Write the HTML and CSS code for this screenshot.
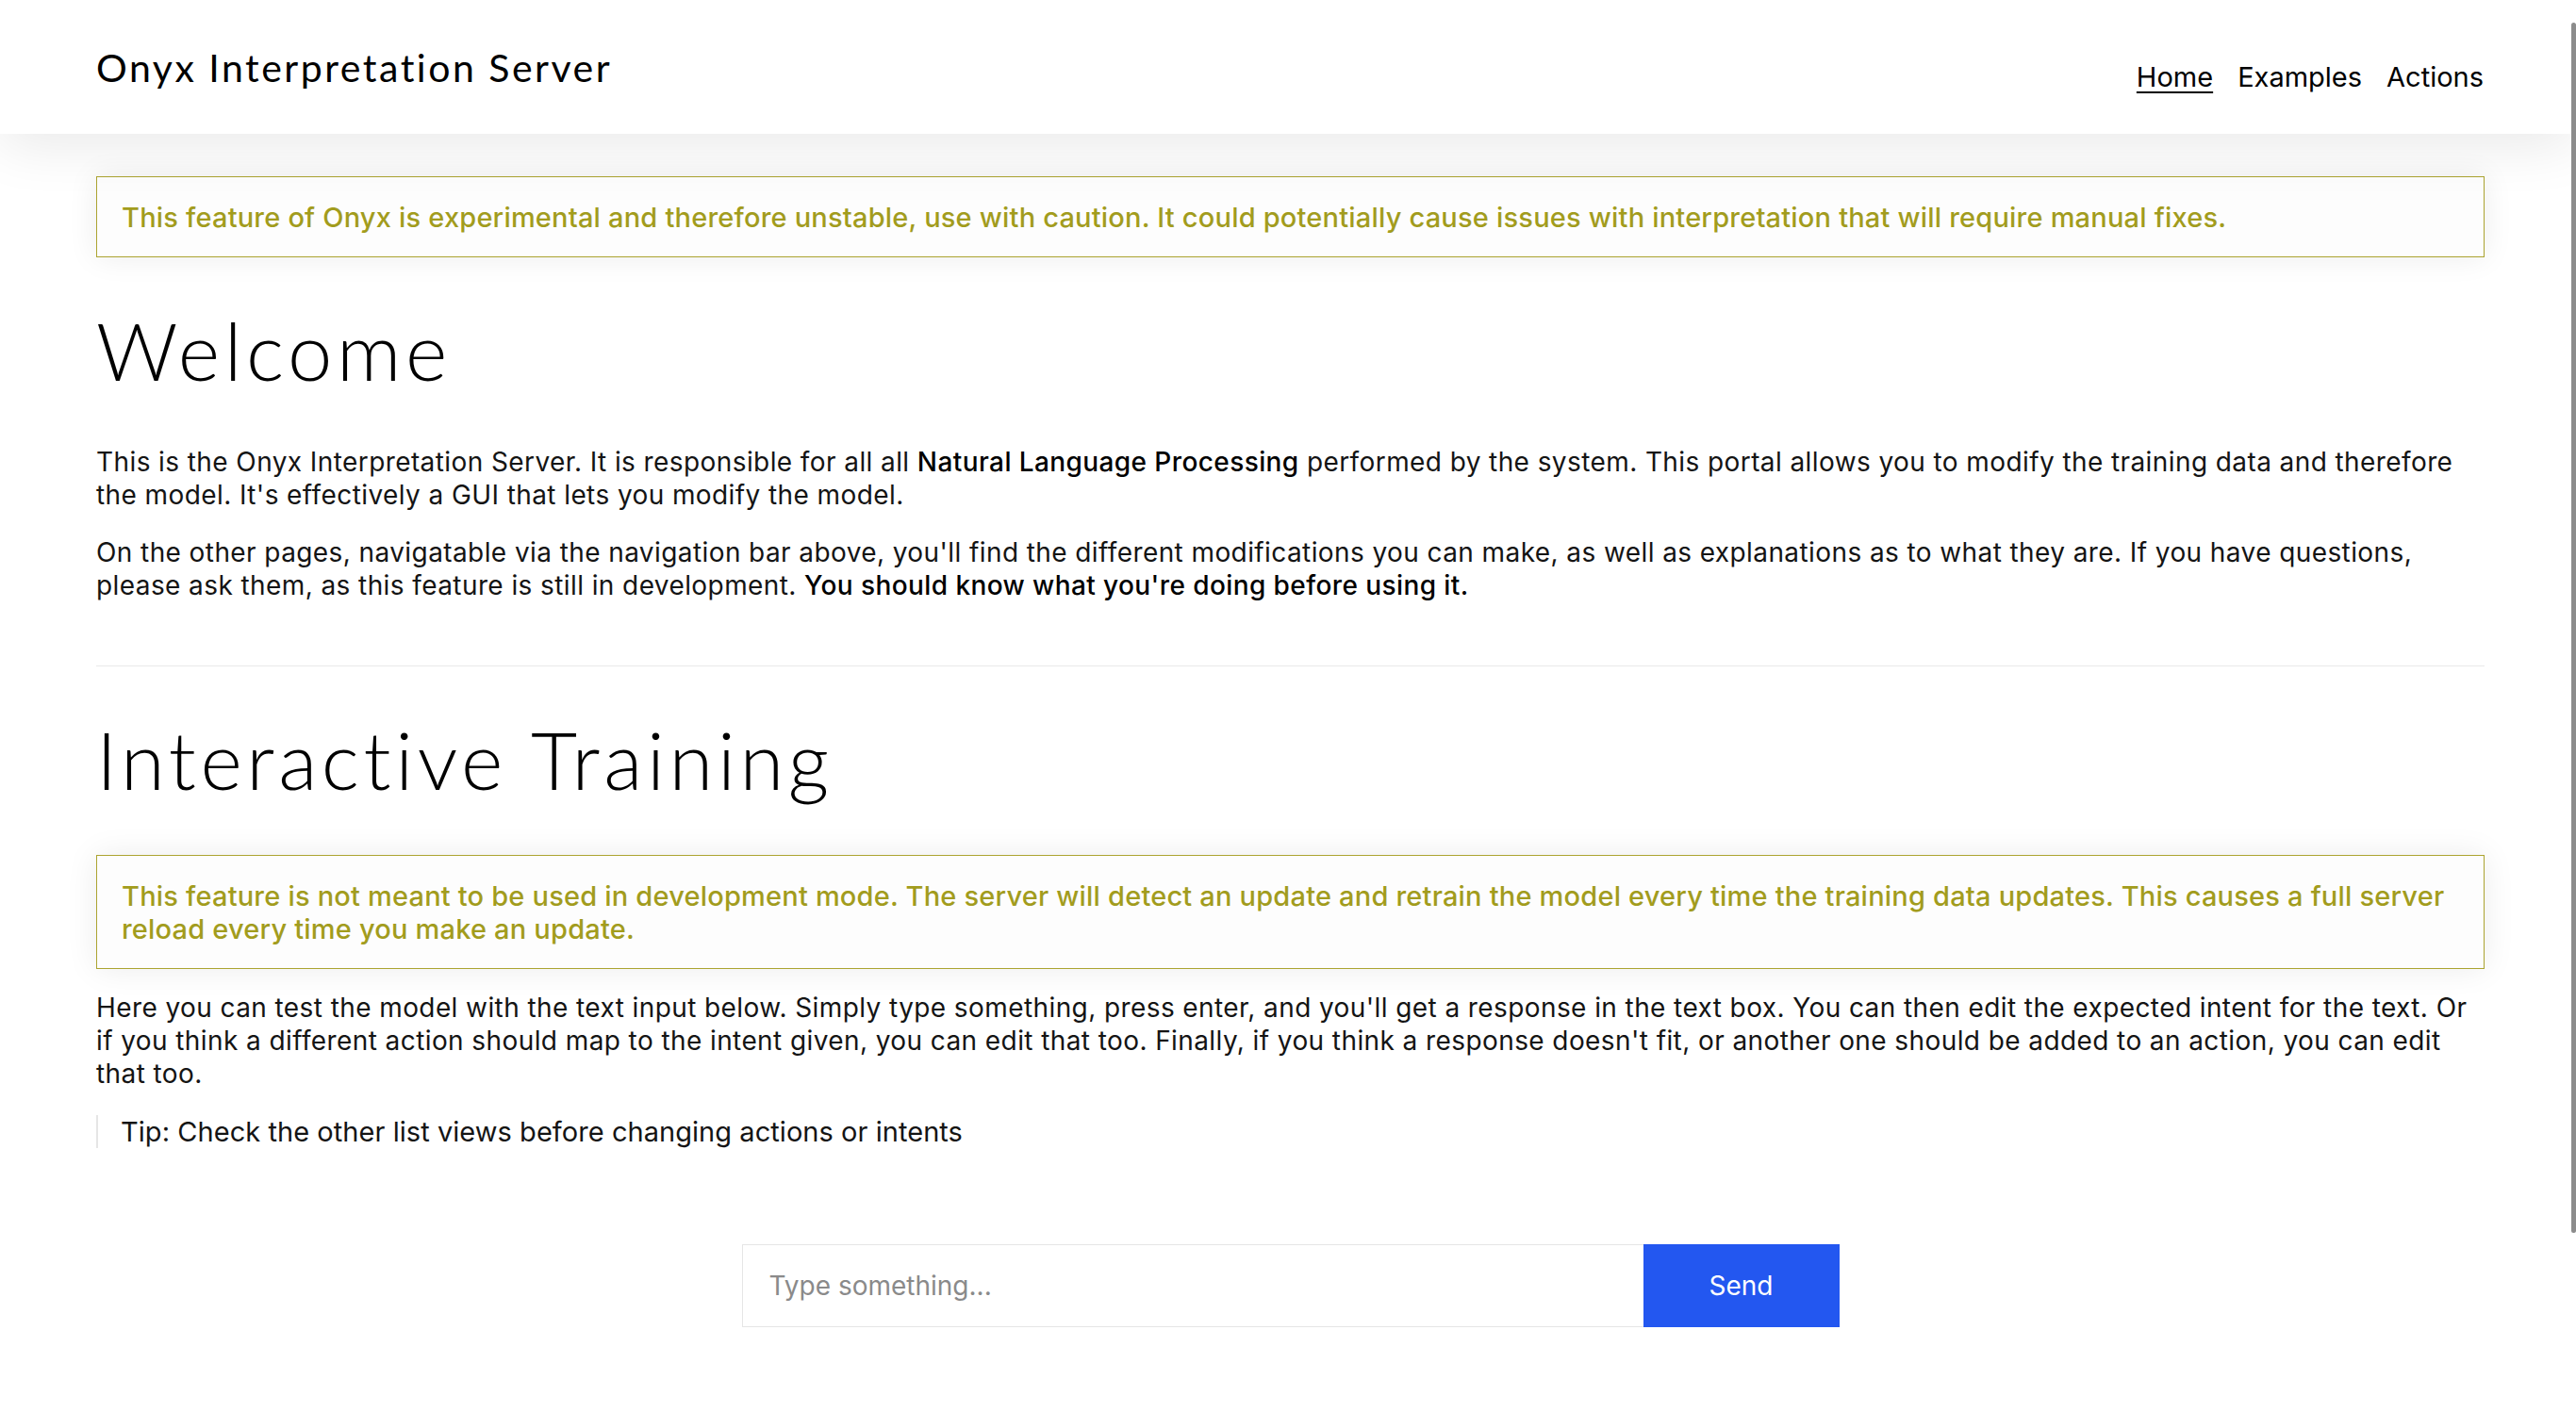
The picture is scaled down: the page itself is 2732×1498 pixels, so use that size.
FILE: index.html
```html
<!DOCTYPE html>
<html lang="en">
<head>
<meta charset="utf-8">
<title>Onyx Interpretation Server</title>
<link rel="stylesheet" href="styles.css">
</head>
<body>
<header class="topbar">
  <div class="brand">Onyx Interpretation Server</div>
  <nav class="nav">
    <a class="nav-link active" href="#">Home</a>
    <a class="nav-link" href="#">Examples</a>
    <a class="nav-link" href="#">Actions</a>
  </nav>
</header>
<main class="content">
  <div class="alert">This feature of Onyx is experimental and therefore unstable, use with caution. It could potentially cause issues with interpretation that will require manual fixes.</div>
  <h1 class="heading">Welcome</h1>
  <p class="text">This is the Onyx Interpretation Server. It is responsible for all all <strong>Natural Language Processing</strong> performed by the system. This portal allows you to modify the training data and therefore the model. It's effectively a GUI that lets you modify the model.</p>
  <p class="text">On the other pages, navigatable via the navigation bar above, you'll find the different modifications you can make, as well as explanations as to what they are. If you have questions, please ask them, as this feature is still in development. <strong>You should know what you're doing before using it.</strong></p>
  <hr class="divider">
  <h1 class="heading">Interactive Training</h1>
  <div class="alert">This feature is not meant to be used in development mode. The server will detect an update and retrain the model every time the training data updates. This causes a full server reload every time you make an update.</div>
  <p class="text">Here you can test the model with the text input below. Simply type something, press enter, and you'll get a response in the text box. You can then edit the expected intent for the text. Or if you think a different action should map to the intent given, you can edit that too. Finally, if you think a response doesn't fit, or another one should be added to an action, you can edit that too.</p>
  <blockquote class="tip">Tip: Check the other list views before changing actions or intents</blockquote>
  <form class="chat">
    <input class="chat-input" type="text" placeholder="Type something...">
    <button class="chat-send" type="button">Send</button>
  </form>
</main>
<div class="scroll-thumb"></div>
</body>
</html>
```

FILE: styles.css
```css
html, body {
  margin: 0;
  padding: 0;
  background: #ffffff;
  overflow: hidden;
}

body {
  font-family: Inter, "Noto Sans", "Liberation Sans", sans-serif;
  font-size: 28px;
  line-height: 35px;
  letter-spacing: 0.41px;
  color: #141414;
}

.topbar {
  position: relative;
  z-index: 2;
  height: 142px;
  box-sizing: border-box;
  padding: 0 98px 0 102px;
  display: flex;
  justify-content: space-between;
  align-items: flex-start;
  background: #ffffff;
  box-shadow: 0 12px 60px rgba(0, 0, 0, 0.09);
}

.brand {
  margin-top: 48px;
  font-family: Lato, "Open Sans", sans-serif;
  font-size: 41px;
  line-height: 48px;
  font-weight: 400;
  letter-spacing: 2.5px;
  color: #000000;
}

.nav {
  margin-top: 64px;
  display: flex;
  gap: 26px;
}

.nav-link {
  font-size: 29px;
  line-height: 35px;
  letter-spacing: 0;
  color: #000000;
  text-decoration: none;
}

.nav-link.active {
  text-decoration: underline;
  text-decoration-thickness: 2px;
  text-underline-offset: 5px;
}

.content {
  position: relative;
  z-index: 1;
  padding: 45px 97px 0 102px;
}

.alert {
  background: #fdfdfd;
  border: 1px solid #aca431;
  color: #a29c1d;
  font-size: 29px;
  letter-spacing: 0.2px;
  font-weight: 500;
  padding: 25px 26px 24px 26px;
  box-shadow: 0 0 32px rgba(0, 0, 0, 0.08);
}

.heading {
  margin: 47px 0 51px 0;
  font-family: Lato, "Open Sans", sans-serif;
  font-weight: 300;
  font-size: 85px;
  line-height: 1.2;
  letter-spacing: 4.6px;
  color: #000000;
}

.text {
  margin: 0 0 26px 0;
}

.text strong {
  font-weight: 500;
  color: #000000;
}

.divider {
  margin: 67px 0 47px 0;
  border: 0;
  border-top: 1px solid #e9e9e9;
  height: 0;
}

.alert + .text {
  margin-top: 24px;
}

.tip {
  margin: 0;
  padding-left: 24px;
  border-left: 2px solid #e6e6e6;
  font-size: 29px;
  letter-spacing: 0.05px;
}

.chat {
  margin-top: 102px;
  display: flex;
  justify-content: center;
}

.chat-input {
  width: 956px;
  height: 88px;
  box-sizing: border-box;
  border: 1px solid #e6e6e6;
  border-right: 0;
  padding: 0 28px;
  font-family: Inter, "Noto Sans", sans-serif;
  font-size: 28px;
  color: #141414;
  background: #ffffff;
  outline: none;
}

.chat-input::placeholder {
  color: #8a8a8a;
}

.chat-send {
  width: 208px;
  height: 88px;
  border: 0;
  background: #2357f0;
  color: #ffffff;
  font-family: Inter, "Noto Sans", sans-serif;
  font-size: 28px;
}

.scroll-thumb {
  position: fixed;
  top: 24px;
  right: 0;
  width: 5px;
  height: 1284px;
  background: #8c8c8c;
  border-radius: 3px;
  z-index: 5;
}
```
